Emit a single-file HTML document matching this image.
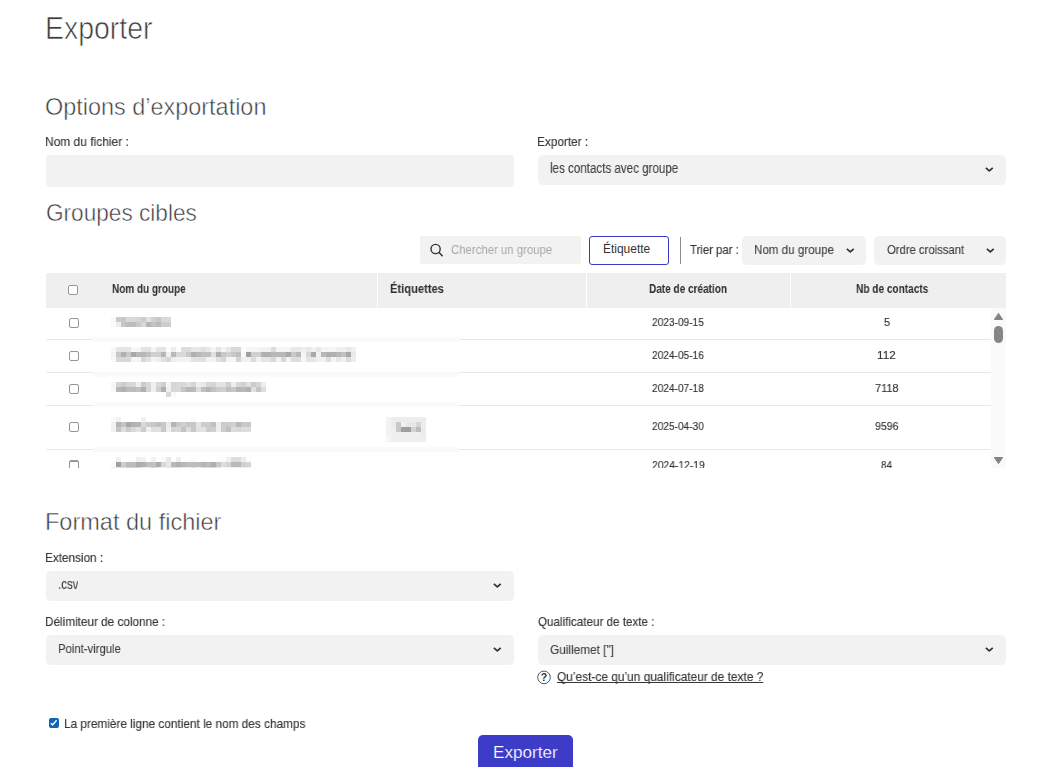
<!DOCTYPE html>
<html><head><meta charset="utf-8">
<style>
*{box-sizing:border-box;margin:0;padding:0}
html,body{width:1060px;height:767px;overflow:hidden;background:#fff}
body{font-family:"Liberation Sans",sans-serif;position:relative}
.t{position:absolute;white-space:nowrap;line-height:1;transform-origin:0 0}
.b{position:absolute}
.cb{position:absolute;width:10px;height:10px;border:1px solid #969696;border-radius:2px;background:#fff}
</style></head><body>
<div class="t" style="left:45.10px;top:13.00px;font-size:30.5px;color:#3c3c3c;transform:scaleX(0.9324);-webkit-text-stroke:0.65px #fff;">Exporter</div>
<div class="t" style="left:45.02px;top:95.20px;font-size:24px;color:#3c3c3c;transform:scaleX(0.9763);-webkit-text-stroke:0.5px #fff;">Options d’exportation</div>
<div class="t" style="left:45.08px;top:135.00px;font-size:13px;color:#363636;transform:scaleX(0.9202);will-change:transform;-webkit-text-stroke:0.15px #363636;">Nom du fichier :</div>
<div class="t" style="left:537.09px;top:135.00px;font-size:13px;color:#363636;transform:scaleX(0.9074);will-change:transform;-webkit-text-stroke:0.15px #363636;">Exporter :</div>
<div class="b" style="left:46px;top:155px;width:468px;height:32px;background:#f2f2f2;border-radius:4px;"></div>
<div class="b" style="left:538px;top:155px;width:468px;height:30px;background:#f2f2f2;border-radius:5px;"></div>
<div class="t" style="left:549.67px;top:161.00px;font-size:14px;color:#404040;transform:scaleX(0.8281);will-change:transform;-webkit-text-stroke:0.12px #404040;">les contacts avec groupe</div>
<svg class="b" style="left:983.20px;top:164.90px" width="12.60" height="8.80"><polyline points="2.85,2.85 6.30,5.95 9.75,2.85" fill="none" stroke="#333" stroke-width="1.7"/></svg>
<div class="t" style="left:45.66px;top:200.80px;font-size:24px;color:#3c3c3c;transform:scaleX(0.9424);-webkit-text-stroke:0.5px #fff;">Groupes cibles</div>
<div class="b" style="left:420px;top:236px;width:161px;height:28px;background:#f2f2f2;border-radius:3px;"></div>
<svg class="b" style="left:428px;top:242px" width="18" height="18"><circle cx="7.6" cy="7" r="4.6" fill="none" stroke="#333" stroke-width="1.4"/><line x1="10.9" y1="10.3" x2="14.6" y2="14.2" stroke="#333" stroke-width="1.5"/></svg>
<div class="t" style="left:450.73px;top:242.80px;font-size:13px;color:#a8a8a8;transform:scaleX(0.8746);will-change:transform;">Chercher un groupe</div>
<div class="b" style="left:589px;top:236px;width:80px;height:29px;border:1px solid #3b3bc6;border-radius:3px;background:#fff"></div>
<div class="t" style="left:603.08px;top:241.90px;font-size:13px;color:#333;transform:scaleX(0.9200);">Étiquette</div>
<div class="b" style="left:680px;top:237px;width:1px;height:27px;background:#8a8a8a"></div>
<div class="t" style="left:689.50px;top:242.80px;font-size:13px;color:#363636;transform:scaleX(0.8745);will-change:transform;-webkit-text-stroke:0.15px #363636;">Trier par :</div>
<div class="b" style="left:742px;top:236px;width:124px;height:29px;background:#f2f2f2;border-radius:5px;"></div>
<div class="t" style="left:754.11px;top:242.80px;font-size:13px;color:#404040;transform:scaleX(0.8920);will-change:transform;-webkit-text-stroke:0.12px #404040;">Nom du groupe</div>
<svg class="b" style="left:844.20px;top:245.80px" width="12.60" height="8.80"><polyline points="2.85,2.85 6.30,5.95 9.75,2.85" fill="none" stroke="#333" stroke-width="1.7"/></svg>
<div class="b" style="left:874px;top:236px;width:132px;height:29px;background:#f2f2f2;border-radius:5px;"></div>
<div class="t" style="left:886.70px;top:242.80px;font-size:13px;color:#404040;transform:scaleX(0.8674);will-change:transform;-webkit-text-stroke:0.12px #404040;">Ordre croissant</div>
<svg class="b" style="left:983.70px;top:245.80px" width="12.60" height="8.80"><polyline points="2.85,2.85 6.30,5.95 9.75,2.85" fill="none" stroke="#333" stroke-width="1.7"/></svg>
<div class="b" style="left:46px;top:273px;width:960px;height:35px;background:#efefef;border-radius:0px;"></div>
<div class="b" style="left:377px;top:273px;width:1px;height:35px;background:#fff"></div>
<div class="b" style="left:586px;top:273px;width:1px;height:35px;background:#fff"></div>
<div class="b" style="left:790px;top:273px;width:1px;height:35px;background:#fff"></div>
<div class="cb" style="left:68px;top:285px"></div>
<div class="t" style="left:111.77px;top:283.30px;font-size:12px;font-weight:700;color:#2e2e2e;transform:scaleX(0.8310);will-change:transform;">Nom du groupe</div>
<div class="t" style="left:390.07px;top:283.30px;font-size:12px;font-weight:700;color:#2e2e2e;transform:scaleX(0.9286);will-change:transform;">Étiquettes</div>
<div class="t" style="left:649.46px;top:283.10px;font-size:12px;font-weight:700;color:#2e2e2e;transform:scaleX(0.8359);will-change:transform;">Date de création</div>
<div class="t" style="left:855.66px;top:283.30px;font-size:12px;font-weight:700;color:#2e2e2e;transform:scaleX(0.8405);will-change:transform;">Nb de contacts</div>
<div class="b" style="left:46px;top:308px;width:960px;height:160px;overflow:hidden">
<div class="b" style="left:0;top:31px;width:945px;height:1px;background:#e9e9e9"></div><div class="b" style="left:0;top:64px;width:945px;height:1px;background:#e9e9e9"></div><div class="b" style="left:0;top:97px;width:945px;height:1px;background:#e9e9e9"></div><div class="b" style="left:0;top:141px;width:945px;height:1px;background:#e9e9e9"></div><div class="b" style="left:47px;top:29px;width:366px;height:5px;background:#fafafa"></div><div class="b" style="left:47px;top:64px;width:366px;height:5px;background:#fafafa"></div><div class="b" style="left:47px;top:94px;width:366px;height:5px;background:#fafafa"></div><div class="b" style="left:47px;top:139px;width:366px;height:5px;background:#fafafa"></div><div class="cb" style="left:23px;top:10px"></div><div class="cb" style="left:23px;top:43px"></div><div class="cb" style="left:23px;top:76px"></div><div class="cb" style="left:23px;top:114px"></div><div class="cb" style="left:23px;top:152px"></div>
</div>
<svg class="b" style="left:111px;top:317px" width="60" height="10" shape-rendering="crispEdges"><rect x="0" y="0" width="5" height="5" fill="#f8f8f8"/><rect x="5" y="0" width="5" height="5" fill="#cbcbcb"/><rect x="10" y="0" width="5" height="5" fill="#c8c8c8"/><rect x="15" y="0" width="5" height="5" fill="#dadada"/><rect x="20" y="0" width="5" height="5" fill="#d8d8d8"/><rect x="25" y="0" width="5" height="5" fill="#d5d5d5"/><rect x="30" y="0" width="5" height="5" fill="#cccccc"/><rect x="35" y="0" width="5" height="5" fill="#e2e2e2"/><rect x="40" y="0" width="5" height="5" fill="#d0d0d0"/><rect x="45" y="0" width="5" height="5" fill="#c8c8c8"/><rect x="50" y="0" width="5" height="5" fill="#d8d8d8"/><rect x="55" y="0" width="5" height="5" fill="#dadada"/><rect x="0" y="5" width="5" height="5" fill="#fafafa"/><rect x="5" y="5" width="5" height="5" fill="#eeeeee"/><rect x="10" y="5" width="5" height="5" fill="#c6c6c6"/><rect x="15" y="5" width="5" height="5" fill="#bdbdbd"/><rect x="20" y="5" width="5" height="5" fill="#bdbdbd"/><rect x="25" y="5" width="5" height="5" fill="#c8c8c8"/><rect x="30" y="5" width="5" height="5" fill="#d8d8d8"/><rect x="35" y="5" width="5" height="5" fill="#b5b5b5"/><rect x="40" y="5" width="5" height="5" fill="#c2c2c2"/><rect x="45" y="5" width="5" height="5" fill="#bababa"/><rect x="50" y="5" width="5" height="5" fill="#cccccc"/><rect x="55" y="5" width="5" height="5" fill="#cccccc"/></svg>
<svg class="b" style="left:111px;top:347px" width="245" height="15" shape-rendering="crispEdges"><rect x="0" y="0" width="5" height="5" fill="#f8f8f8"/><rect x="5" y="0" width="5" height="5" fill="#e5e5e5"/><rect x="10" y="0" width="5" height="5" fill="#e5e5e5"/><rect x="15" y="0" width="5" height="5" fill="#e5e5e5"/><rect x="20" y="0" width="5" height="5" fill="#f8f8f8"/><rect x="25" y="0" width="5" height="5" fill="#f5f5f5"/><rect x="30" y="0" width="5" height="5" fill="#e2e2e2"/><rect x="35" y="0" width="5" height="5" fill="#e2e2e2"/><rect x="40" y="0" width="5" height="5" fill="#f5f5f5"/><rect x="45" y="0" width="5" height="5" fill="#e5e5e5"/><rect x="50" y="0" width="5" height="5" fill="#e5e5e5"/><rect x="55" y="0" width="5" height="5" fill="#fcfcfc"/><rect x="60" y="0" width="5" height="5" fill="#eeeeee"/><rect x="65" y="0" width="5" height="5" fill="#fcfcfc"/><rect x="70" y="0" width="5" height="5" fill="#dddddd"/><rect x="75" y="0" width="5" height="5" fill="#dddddd"/><rect x="80" y="0" width="5" height="5" fill="#e8e8e8"/><rect x="85" y="0" width="5" height="5" fill="#e8e8e8"/><rect x="90" y="0" width="5" height="5" fill="#e0e0e0"/><rect x="95" y="0" width="5" height="5" fill="#e8e8e8"/><rect x="100" y="0" width="5" height="5" fill="#f5f5f5"/><rect x="105" y="0" width="5" height="5" fill="#e5e5e5"/><rect x="110" y="0" width="5" height="5" fill="#f5f5f5"/><rect x="115" y="0" width="5" height="5" fill="#e8e8e8"/><rect x="120" y="0" width="5" height="5" fill="#d8d8d8"/><rect x="125" y="0" width="5" height="5" fill="#d8d8d8"/><rect x="130" y="0" width="5" height="5" fill="#fcfcfc"/><rect x="135" y="0" width="5" height="5" fill="#f5f5f5"/><rect x="140" y="0" width="5" height="5" fill="#f5f5f5"/><rect x="145" y="0" width="5" height="5" fill="#f5f5f5"/><rect x="150" y="0" width="5" height="5" fill="#f2f2f2"/><rect x="155" y="0" width="5" height="5" fill="#f2f2f2"/><rect x="160" y="0" width="5" height="5" fill="#dddddd"/><rect x="165" y="0" width="5" height="5" fill="#f5f5f5"/><rect x="170" y="0" width="5" height="5" fill="#f5f5f5"/><rect x="175" y="0" width="5" height="5" fill="#f5f5f5"/><rect x="180" y="0" width="5" height="5" fill="#e8e8e8"/><rect x="185" y="0" width="5" height="5" fill="#e8e8e8"/><rect x="190" y="0" width="5" height="5" fill="#f0f0f0"/><rect x="195" y="0" width="5" height="5" fill="#e8e8e8"/><rect x="200" y="0" width="5" height="5" fill="#f2f2f2"/><rect x="205" y="0" width="5" height="5" fill="#e8e8e8"/><rect x="210" y="0" width="5" height="5" fill="#f5f5f5"/><rect x="215" y="0" width="5" height="5" fill="#f5f5f5"/><rect x="220" y="0" width="5" height="5" fill="#f5f5f5"/><rect x="225" y="0" width="5" height="5" fill="#f0f0f0"/><rect x="230" y="0" width="5" height="5" fill="#f0f0f0"/><rect x="235" y="0" width="5" height="5" fill="#e8e8e8"/><rect x="240" y="0" width="5" height="5" fill="#f0f0f0"/><rect x="0" y="5" width="5" height="5" fill="#f5f5f5"/><rect x="5" y="5" width="5" height="5" fill="#c8c8c8"/><rect x="10" y="5" width="5" height="5" fill="#b0b0b0"/><rect x="15" y="5" width="5" height="5" fill="#c8c8c8"/><rect x="20" y="5" width="5" height="5" fill="#a8a8a8"/><rect x="25" y="5" width="5" height="5" fill="#b8b8b8"/><rect x="30" y="5" width="5" height="5" fill="#b8b8b8"/><rect x="35" y="5" width="5" height="5" fill="#c0c0c0"/><rect x="40" y="5" width="5" height="5" fill="#d0d0d0"/><rect x="45" y="5" width="5" height="5" fill="#d0d0d0"/><rect x="50" y="5" width="5" height="5" fill="#b8b8b8"/><rect x="55" y="5" width="5" height="5" fill="#f0f0f0"/><rect x="60" y="5" width="5" height="5" fill="#b8b8b8"/><rect x="65" y="5" width="5" height="5" fill="#d8d8d8"/><rect x="70" y="5" width="5" height="5" fill="#d8d8d8"/><rect x="75" y="5" width="5" height="5" fill="#c8c8c8"/><rect x="80" y="5" width="5" height="5" fill="#b0b0b0"/><rect x="85" y="5" width="5" height="5" fill="#b8b8b8"/><rect x="90" y="5" width="5" height="5" fill="#c0c0c0"/><rect x="95" y="5" width="5" height="5" fill="#c0c0c0"/><rect x="100" y="5" width="5" height="5" fill="#e0e0e0"/><rect x="105" y="5" width="5" height="5" fill="#b0b0b0"/><rect x="110" y="5" width="5" height="5" fill="#c8c8c8"/><rect x="115" y="5" width="5" height="5" fill="#d0d0d0"/><rect x="120" y="5" width="5" height="5" fill="#c8c8c8"/><rect x="125" y="5" width="5" height="5" fill="#c0c0c0"/><rect x="130" y="5" width="5" height="5" fill="#f8f8f8"/><rect x="135" y="5" width="5" height="5" fill="#a0a0a0"/><rect x="140" y="5" width="5" height="5" fill="#d0d0d0"/><rect x="145" y="5" width="5" height="5" fill="#d0d0d0"/><rect x="150" y="5" width="5" height="5" fill="#b0b0b0"/><rect x="155" y="5" width="5" height="5" fill="#b0b0b0"/><rect x="160" y="5" width="5" height="5" fill="#b8b8b8"/><rect x="165" y="5" width="5" height="5" fill="#b8b8b8"/><rect x="170" y="5" width="5" height="5" fill="#b8b8b8"/><rect x="175" y="5" width="5" height="5" fill="#a8a8a8"/><rect x="180" y="5" width="5" height="5" fill="#c8c8c8"/><rect x="185" y="5" width="5" height="5" fill="#b8b8b8"/><rect x="190" y="5" width="5" height="5" fill="#f5f5f5"/><rect x="195" y="5" width="5" height="5" fill="#d8d8d8"/><rect x="200" y="5" width="5" height="5" fill="#a8a8a8"/><rect x="205" y="5" width="5" height="5" fill="#f0f0f0"/><rect x="210" y="5" width="5" height="5" fill="#b8b8b8"/><rect x="215" y="5" width="5" height="5" fill="#b0b0b0"/><rect x="220" y="5" width="5" height="5" fill="#b0b0b0"/><rect x="225" y="5" width="5" height="5" fill="#b8b8b8"/><rect x="230" y="5" width="5" height="5" fill="#c0c0c0"/><rect x="235" y="5" width="5" height="5" fill="#a8a8a8"/><rect x="240" y="5" width="5" height="5" fill="#e8e8e8"/><rect x="0" y="10" width="5" height="5" fill="#f8f8f8"/><rect x="5" y="10" width="5" height="5" fill="#d8d8d8"/><rect x="10" y="10" width="5" height="5" fill="#d8d8d8"/><rect x="15" y="10" width="5" height="5" fill="#d8d8d8"/><rect x="20" y="10" width="5" height="5" fill="#f5f5f5"/><rect x="25" y="10" width="5" height="5" fill="#f5f5f5"/><rect x="30" y="10" width="5" height="5" fill="#d8d8d8"/><rect x="35" y="10" width="5" height="5" fill="#e2e2e2"/><rect x="40" y="10" width="5" height="5" fill="#f5f5f5"/><rect x="45" y="10" width="5" height="5" fill="#eeeeee"/><rect x="50" y="10" width="5" height="5" fill="#e0e0e0"/><rect x="55" y="10" width="5" height="5" fill="#d8d8d8"/><rect x="60" y="10" width="5" height="5" fill="#eeeeee"/><rect x="65" y="10" width="5" height="5" fill="#f2f2f2"/><rect x="70" y="10" width="5" height="5" fill="#f2f2f2"/><rect x="75" y="10" width="5" height="5" fill="#f2f2f2"/><rect x="80" y="10" width="5" height="5" fill="#e2e2e2"/><rect x="85" y="10" width="5" height="5" fill="#e2e2e2"/><rect x="90" y="10" width="5" height="5" fill="#e2e2e2"/><rect x="95" y="10" width="5" height="5" fill="#f2f2f2"/><rect x="100" y="10" width="5" height="5" fill="#f2f2f2"/><rect x="105" y="10" width="5" height="5" fill="#e0e0e0"/><rect x="110" y="10" width="5" height="5" fill="#d5d5d5"/><rect x="115" y="10" width="5" height="5" fill="#f5f5f5"/><rect x="120" y="10" width="5" height="5" fill="#f5f5f5"/><rect x="125" y="10" width="5" height="5" fill="#d5d5d5"/><rect x="130" y="10" width="5" height="5" fill="#f0f0f0"/><rect x="135" y="10" width="5" height="5" fill="#f0f0f0"/><rect x="140" y="10" width="5" height="5" fill="#dddddd"/><rect x="145" y="10" width="5" height="5" fill="#f2f2f2"/><rect x="150" y="10" width="5" height="5" fill="#e5e5e5"/><rect x="155" y="10" width="5" height="5" fill="#e5e5e5"/><rect x="160" y="10" width="5" height="5" fill="#d8d8d8"/><rect x="165" y="10" width="5" height="5" fill="#f2f2f2"/><rect x="170" y="10" width="5" height="5" fill="#d8d8d8"/><rect x="175" y="10" width="5" height="5" fill="#f2f2f2"/><rect x="180" y="10" width="5" height="5" fill="#dddddd"/><rect x="185" y="10" width="5" height="5" fill="#dddddd"/><rect x="190" y="10" width="5" height="5" fill="#f5f5f5"/><rect x="195" y="10" width="5" height="5" fill="#e5e5e5"/><rect x="200" y="10" width="5" height="5" fill="#e5e5e5"/><rect x="205" y="10" width="5" height="5" fill="#f0f0f0"/><rect x="210" y="10" width="5" height="5" fill="#f2f2f2"/><rect x="215" y="10" width="5" height="5" fill="#dddddd"/><rect x="220" y="10" width="5" height="5" fill="#f5f5f5"/><rect x="225" y="10" width="5" height="5" fill="#e8e8e8"/><rect x="230" y="10" width="5" height="5" fill="#f2f2f2"/><rect x="235" y="10" width="5" height="5" fill="#dddddd"/><rect x="240" y="10" width="5" height="5" fill="#eeeeee"/></svg>
<svg class="b" style="left:111px;top:382px" width="155" height="15" shape-rendering="crispEdges"><rect x="0" y="0" width="5" height="5" fill="#f5f5f5"/><rect x="5" y="0" width="5" height="5" fill="#d5d5d5"/><rect x="10" y="0" width="5" height="5" fill="#cccccc"/><rect x="15" y="0" width="5" height="5" fill="#d5d5d5"/><rect x="20" y="0" width="5" height="5" fill="#d8d8d8"/><rect x="25" y="0" width="5" height="5" fill="#eeeeee"/><rect x="30" y="0" width="5" height="5" fill="#cccccc"/><rect x="35" y="0" width="5" height="5" fill="#d8d8d8"/><rect x="40" y="0" width="5" height="5" fill="#f0f0f0"/><rect x="45" y="0" width="5" height="5" fill="#d8d8d8"/><rect x="50" y="0" width="5" height="5" fill="#d0d0d0"/><rect x="55" y="0" width="5" height="5" fill="#f5f5f5"/><rect x="60" y="0" width="5" height="5" fill="#d5d5d5"/><rect x="65" y="0" width="5" height="5" fill="#d8d8d8"/><rect x="70" y="0" width="5" height="5" fill="#d8d8d8"/><rect x="75" y="0" width="5" height="5" fill="#e0e0e0"/><rect x="80" y="0" width="5" height="5" fill="#d5d5d5"/><rect x="85" y="0" width="5" height="5" fill="#eeeeee"/><rect x="90" y="0" width="5" height="5" fill="#e8e8e8"/><rect x="95" y="0" width="5" height="5" fill="#d8d8d8"/><rect x="100" y="0" width="5" height="5" fill="#d5d5d5"/><rect x="105" y="0" width="5" height="5" fill="#e5e5e5"/><rect x="110" y="0" width="5" height="5" fill="#e2e2e2"/><rect x="115" y="0" width="5" height="5" fill="#d0d0d0"/><rect x="120" y="0" width="5" height="5" fill="#eeeeee"/><rect x="125" y="0" width="5" height="5" fill="#d8d8d8"/><rect x="130" y="0" width="5" height="5" fill="#d0d0d0"/><rect x="135" y="0" width="5" height="5" fill="#e0e0e0"/><rect x="140" y="0" width="5" height="5" fill="#cccccc"/><rect x="145" y="0" width="5" height="5" fill="#d5d5d5"/><rect x="150" y="0" width="5" height="5" fill="#eeeeee"/><rect x="0" y="5" width="5" height="5" fill="#f8f8f8"/><rect x="5" y="5" width="5" height="5" fill="#b8b8b8"/><rect x="10" y="5" width="5" height="5" fill="#b0b0b0"/><rect x="15" y="5" width="5" height="5" fill="#bcbcbc"/><rect x="20" y="5" width="5" height="5" fill="#bcbcbc"/><rect x="25" y="5" width="5" height="5" fill="#c0c0c0"/><rect x="30" y="5" width="5" height="5" fill="#b0b0b0"/><rect x="35" y="5" width="5" height="5" fill="#d5d5d5"/><rect x="40" y="5" width="5" height="5" fill="#f0f0f0"/><rect x="45" y="5" width="5" height="5" fill="#d0d0d0"/><rect x="50" y="5" width="5" height="5" fill="#b0b0b0"/><rect x="55" y="5" width="5" height="5" fill="#f0f0f0"/><rect x="60" y="5" width="5" height="5" fill="#d8d8d8"/><rect x="65" y="5" width="5" height="5" fill="#d8d8d8"/><rect x="70" y="5" width="5" height="5" fill="#c5c5c5"/><rect x="75" y="5" width="5" height="5" fill="#b8b8b8"/><rect x="80" y="5" width="5" height="5" fill="#bcbcbc"/><rect x="85" y="5" width="5" height="5" fill="#dddddd"/><rect x="90" y="5" width="5" height="5" fill="#c0c0c0"/><rect x="95" y="5" width="5" height="5" fill="#b5b5b5"/><rect x="100" y="5" width="5" height="5" fill="#c2c2c2"/><rect x="105" y="5" width="5" height="5" fill="#cccccc"/><rect x="110" y="5" width="5" height="5" fill="#d0d0d0"/><rect x="115" y="5" width="5" height="5" fill="#c0c0c0"/><rect x="120" y="5" width="5" height="5" fill="#c8c8c8"/><rect x="125" y="5" width="5" height="5" fill="#b5b5b5"/><rect x="130" y="5" width="5" height="5" fill="#b8b8b8"/><rect x="135" y="5" width="5" height="5" fill="#b0b0b0"/><rect x="140" y="5" width="5" height="5" fill="#e0e0e0"/><rect x="145" y="5" width="5" height="5" fill="#c5c5c5"/><rect x="150" y="5" width="5" height="5" fill="#dddddd"/><rect x="55" y="10" width="5" height="5" fill="#d8d8d8"/><rect x="60" y="10" width="5" height="5" fill="#f8f8f8"/></svg>
<svg class="b" style="left:111px;top:417px" width="140" height="15" shape-rendering="crispEdges"><rect x="0" y="0" width="5" height="5" fill="#fafafa"/><rect x="5" y="0" width="5" height="5" fill="#f2f2f2"/><rect x="30" y="0" width="5" height="5" fill="#f0f0f0"/><rect x="80" y="0" width="5" height="5" fill="#fafafa"/><rect x="0" y="5" width="5" height="5" fill="#f2f2f2"/><rect x="5" y="5" width="5" height="5" fill="#b5b5b5"/><rect x="10" y="5" width="5" height="5" fill="#c5c5c5"/><rect x="15" y="5" width="5" height="5" fill="#a8a8a8"/><rect x="20" y="5" width="5" height="5" fill="#b2b2b2"/><rect x="25" y="5" width="5" height="5" fill="#b5b5b5"/><rect x="30" y="5" width="5" height="5" fill="#d8d8d8"/><rect x="35" y="5" width="5" height="5" fill="#cccccc"/><rect x="40" y="5" width="5" height="5" fill="#c8c8c8"/><rect x="45" y="5" width="5" height="5" fill="#c0c0c0"/><rect x="50" y="5" width="5" height="5" fill="#c8c8c8"/><rect x="55" y="5" width="5" height="5" fill="#e8e8e8"/><rect x="60" y="5" width="5" height="5" fill="#b5b5b5"/><rect x="65" y="5" width="5" height="5" fill="#c8c8c8"/><rect x="70" y="5" width="5" height="5" fill="#d0d0d0"/><rect x="75" y="5" width="5" height="5" fill="#c8c8c8"/><rect x="80" y="5" width="5" height="5" fill="#c8c8c8"/><rect x="85" y="5" width="5" height="5" fill="#e5e5e5"/><rect x="90" y="5" width="5" height="5" fill="#cccccc"/><rect x="95" y="5" width="5" height="5" fill="#cccccc"/><rect x="100" y="5" width="5" height="5" fill="#c0c0c0"/><rect x="105" y="5" width="5" height="5" fill="#eeeeee"/><rect x="110" y="5" width="5" height="5" fill="#cccccc"/><rect x="115" y="5" width="5" height="5" fill="#cccccc"/><rect x="120" y="5" width="5" height="5" fill="#d0d0d0"/><rect x="125" y="5" width="5" height="5" fill="#b8b8b8"/><rect x="130" y="5" width="5" height="5" fill="#c8c8c8"/><rect x="135" y="5" width="5" height="5" fill="#c8c8c8"/><rect x="0" y="10" width="5" height="5" fill="#f0f0f0"/><rect x="5" y="10" width="5" height="5" fill="#c5c5c5"/><rect x="10" y="10" width="5" height="5" fill="#dddddd"/><rect x="15" y="10" width="5" height="5" fill="#cccccc"/><rect x="20" y="10" width="5" height="5" fill="#d8d8d8"/><rect x="25" y="10" width="5" height="5" fill="#e2e2e2"/><rect x="30" y="10" width="5" height="5" fill="#cccccc"/><rect x="35" y="10" width="5" height="5" fill="#f0f0f0"/><rect x="40" y="10" width="5" height="5" fill="#e0e0e0"/><rect x="45" y="10" width="5" height="5" fill="#e0e0e0"/><rect x="50" y="10" width="5" height="5" fill="#c8c8c8"/><rect x="55" y="10" width="5" height="5" fill="#eeeeee"/><rect x="60" y="10" width="5" height="5" fill="#d5d5d5"/><rect x="65" y="10" width="5" height="5" fill="#d8d8d8"/><rect x="70" y="10" width="5" height="5" fill="#c5c5c5"/><rect x="75" y="10" width="5" height="5" fill="#dddddd"/><rect x="80" y="10" width="5" height="5" fill="#c8c8c8"/><rect x="85" y="10" width="5" height="5" fill="#e2e2e2"/><rect x="90" y="10" width="5" height="5" fill="#e2e2e2"/><rect x="95" y="10" width="5" height="5" fill="#cccccc"/><rect x="100" y="10" width="5" height="5" fill="#d0d0d0"/><rect x="105" y="10" width="5" height="5" fill="#eeeeee"/><rect x="110" y="10" width="5" height="5" fill="#cccccc"/><rect x="115" y="10" width="5" height="5" fill="#c0c0c0"/><rect x="120" y="10" width="5" height="5" fill="#dddddd"/><rect x="125" y="10" width="5" height="5" fill="#d8d8d8"/><rect x="130" y="10" width="5" height="5" fill="#dddddd"/><rect x="135" y="10" width="5" height="5" fill="#dddddd"/></svg>
<svg class="b" style="left:386px;top:417px" width="40" height="25"><rect x="0" y="0" width="5" height="5" fill="rgb(244,244,244)"/><rect x="5" y="0" width="5" height="5" fill="rgb(237,237,237)"/><rect x="10" y="0" width="5" height="5" fill="rgb(237,237,237)"/><rect x="15" y="0" width="5" height="5" fill="rgb(237,237,237)"/><rect x="20" y="0" width="5" height="5" fill="rgb(237,237,237)"/><rect x="25" y="0" width="5" height="5" fill="rgb(237,237,237)"/><rect x="30" y="0" width="5" height="5" fill="rgb(237,237,237)"/><rect x="35" y="0" width="5" height="5" fill="rgb(236,236,236)"/><rect x="0" y="5" width="5" height="5" fill="rgb(242,242,242)"/><rect x="5" y="5" width="5" height="5" fill="rgb(235,235,235)"/><rect x="10" y="5" width="5" height="5" fill="rgb(200,200,200)"/><rect x="15" y="5" width="5" height="5" fill="rgb(240,240,240)"/><rect x="20" y="5" width="5" height="5" fill="rgb(232,232,232)"/><rect x="25" y="5" width="5" height="5" fill="rgb(232,232,232)"/><rect x="30" y="5" width="5" height="5" fill="rgb(214,214,214)"/><rect x="35" y="5" width="5" height="5" fill="rgb(236,236,236)"/><rect x="0" y="10" width="5" height="5" fill="rgb(242,242,242)"/><rect x="5" y="10" width="5" height="5" fill="rgb(239,239,239)"/><rect x="10" y="10" width="5" height="5" fill="rgb(200,200,200)"/><rect x="15" y="10" width="5" height="5" fill="rgb(158,158,158)"/><rect x="20" y="10" width="5" height="5" fill="rgb(158,158,158)"/><rect x="25" y="10" width="5" height="5" fill="rgb(212,212,212)"/><rect x="30" y="10" width="5" height="5" fill="rgb(189,189,189)"/><rect x="35" y="10" width="5" height="5" fill="rgb(236,236,236)"/><rect x="0" y="15" width="5" height="5" fill="rgb(242,242,242)"/><rect x="5" y="15" width="5" height="5" fill="rgb(239,239,239)"/><rect x="10" y="15" width="5" height="5" fill="rgb(239,239,239)"/><rect x="15" y="15" width="5" height="5" fill="rgb(239,239,239)"/><rect x="20" y="15" width="5" height="5" fill="rgb(239,239,239)"/><rect x="25" y="15" width="5" height="5" fill="rgb(239,239,239)"/><rect x="30" y="15" width="5" height="5" fill="rgb(239,239,239)"/><rect x="35" y="15" width="5" height="5" fill="rgb(236,236,236)"/><rect x="0" y="20" width="5" height="5" fill="rgb(246,246,246)"/><rect x="5" y="20" width="5" height="5" fill="rgb(239,239,239)"/><rect x="10" y="20" width="5" height="5" fill="rgb(239,239,239)"/><rect x="15" y="20" width="5" height="5" fill="rgb(239,239,239)"/><rect x="20" y="20" width="5" height="5" fill="rgb(239,239,239)"/><rect x="25" y="20" width="5" height="5" fill="rgb(239,239,239)"/><rect x="30" y="20" width="5" height="5" fill="rgb(239,239,239)"/><rect x="35" y="20" width="5" height="5" fill="rgb(239,239,239)"/></svg>
<div class="t" style="left:651.50px;top:317.30px;font-size:11.5px;color:#333;transform:scaleX(0.8814);will-change:transform;-webkit-text-stroke:0.15px #333;">2023-09-15</div>
<div class="t" style="left:651.50px;top:350.20px;font-size:11.5px;color:#333;transform:scaleX(0.8814);will-change:transform;-webkit-text-stroke:0.15px #333;">2024-05-16</div>
<div class="t" style="left:651.50px;top:382.90px;font-size:11.5px;color:#333;transform:scaleX(0.8814);will-change:transform;-webkit-text-stroke:0.15px #333;">2024-07-18</div>
<div class="t" style="left:651.50px;top:421.20px;font-size:11.5px;color:#333;transform:scaleX(0.8814);will-change:transform;-webkit-text-stroke:0.15px #333;">2025-04-30</div>
<div class="t" style="left:883.50px;top:317.30px;font-size:11.5px;color:#333;transform:scaleX(0.9500);will-change:transform;-webkit-text-stroke:0.15px #333;">5</div>
<div class="t" style="left:876.68px;top:350.20px;font-size:11.5px;color:#333;transform:scaleX(1.0176);will-change:transform;-webkit-text-stroke:0.15px #333;">112</div>
<div class="t" style="left:875.00px;top:382.90px;font-size:11.5px;color:#333;transform:scaleX(0.9542);will-change:transform;-webkit-text-stroke:0.15px #333;">7118</div>
<div class="t" style="left:875.00px;top:421.20px;font-size:11.5px;color:#333;transform:scaleX(0.9160);will-change:transform;-webkit-text-stroke:0.15px #333;">9596</div>
<div class="b" style="left:0;top:0;width:1060px;height:468px;overflow:hidden">
<svg class="b" style="left:111px;top:457px" width="140" height="15" shape-rendering="crispEdges"><rect x="5" y="0" width="5" height="5" fill="#f2f2f2"/><rect x="25" y="0" width="5" height="5" fill="#f0f0f0"/><rect x="30" y="0" width="5" height="5" fill="#f2f2f2"/><rect x="40" y="0" width="5" height="5" fill="#f2f2f2"/><rect x="50" y="0" width="5" height="5" fill="#fafafa"/><rect x="55" y="0" width="5" height="5" fill="#e8e8e8"/><rect x="65" y="0" width="5" height="5" fill="#eeeeee"/><rect x="80" y="0" width="5" height="5" fill="#fafafa"/><rect x="105" y="0" width="5" height="5" fill="#fcfcfc"/><rect x="110" y="0" width="5" height="5" fill="#fcfcfc"/><rect x="115" y="0" width="5" height="5" fill="#f0f0f0"/><rect x="120" y="0" width="5" height="5" fill="#dddddd"/><rect x="125" y="0" width="5" height="5" fill="#dddddd"/><rect x="130" y="0" width="5" height="5" fill="#eeeeee"/><rect x="135" y="0" width="5" height="5" fill="#fcfcfc"/><rect x="0" y="5" width="5" height="5" fill="#fafafa"/><rect x="5" y="5" width="5" height="5" fill="#a0a0a0"/><rect x="10" y="5" width="5" height="5" fill="#cccccc"/><rect x="15" y="5" width="5" height="5" fill="#bcbcbc"/><rect x="20" y="5" width="5" height="5" fill="#bcbcbc"/><rect x="25" y="5" width="5" height="5" fill="#acacac"/><rect x="30" y="5" width="5" height="5" fill="#b0b0b0"/><rect x="35" y="5" width="5" height="5" fill="#c0c0c0"/><rect x="40" y="5" width="5" height="5" fill="#c0c0c0"/><rect x="45" y="5" width="5" height="5" fill="#acacac"/><rect x="50" y="5" width="5" height="5" fill="#d8d8d8"/><rect x="55" y="5" width="5" height="5" fill="#e8e8e8"/><rect x="60" y="5" width="5" height="5" fill="#b8b8b8"/><rect x="65" y="5" width="5" height="5" fill="#b0b0b0"/><rect x="70" y="5" width="5" height="5" fill="#b8b8b8"/><rect x="75" y="5" width="5" height="5" fill="#bcbcbc"/><rect x="80" y="5" width="5" height="5" fill="#bcbcbc"/><rect x="85" y="5" width="5" height="5" fill="#bcbcbc"/><rect x="90" y="5" width="5" height="5" fill="#b5b5b5"/><rect x="95" y="5" width="5" height="5" fill="#bcbcbc"/><rect x="100" y="5" width="5" height="5" fill="#b0b0b0"/><rect x="105" y="5" width="5" height="5" fill="#c8c8c8"/><rect x="110" y="5" width="5" height="5" fill="#dddddd"/><rect x="115" y="5" width="5" height="5" fill="#d5d5d5"/><rect x="120" y="5" width="5" height="5" fill="#b8b8b8"/><rect x="125" y="5" width="5" height="5" fill="#b8b8b8"/><rect x="130" y="5" width="5" height="5" fill="#d0d0d0"/><rect x="135" y="5" width="5" height="5" fill="#d5d5d5"/><rect x="0" y="10" width="5" height="5" fill="#eeeeee"/><rect x="5" y="10" width="5" height="5" fill="#e8e8e8"/><rect x="10" y="10" width="5" height="5" fill="#dddddd"/><rect x="15" y="10" width="5" height="5" fill="#d5d5d5"/><rect x="20" y="10" width="5" height="5" fill="#d5d5d5"/><rect x="25" y="10" width="5" height="5" fill="#d5d5d5"/><rect x="30" y="10" width="5" height="5" fill="#eeeeee"/><rect x="35" y="10" width="5" height="5" fill="#e8e8e8"/><rect x="40" y="10" width="5" height="5" fill="#d5d5d5"/><rect x="45" y="10" width="5" height="5" fill="#e8e8e8"/><rect x="50" y="10" width="5" height="5" fill="#f2f2f2"/><rect x="55" y="10" width="5" height="5" fill="#e2e2e2"/><rect x="60" y="10" width="5" height="5" fill="#dddddd"/><rect x="65" y="10" width="5" height="5" fill="#e2e2e2"/><rect x="70" y="10" width="5" height="5" fill="#e8e8e8"/><rect x="75" y="10" width="5" height="5" fill="#eeeeee"/><rect x="80" y="10" width="5" height="5" fill="#dddddd"/><rect x="85" y="10" width="5" height="5" fill="#eeeeee"/><rect x="90" y="10" width="5" height="5" fill="#d8d8d8"/><rect x="95" y="10" width="5" height="5" fill="#d8d8d8"/><rect x="100" y="10" width="5" height="5" fill="#d8d8d8"/><rect x="105" y="10" width="5" height="5" fill="#e5e5e5"/><rect x="110" y="10" width="5" height="5" fill="#f5f5f5"/><rect x="115" y="10" width="5" height="5" fill="#f5f5f5"/><rect x="120" y="10" width="5" height="5" fill="#f0f0f0"/><rect x="125" y="10" width="5" height="5" fill="#f0f0f0"/><rect x="130" y="10" width="5" height="5" fill="#eeeeee"/><rect x="135" y="10" width="5" height="5" fill="#eeeeee"/></svg>
<div class="cb" style="left:69px;top:461px"></div>
<div class="t" style="left:651.50px;top:459.60px;font-size:11.5px;color:#333;transform:scaleX(0.8966);will-change:transform;-webkit-text-stroke:0.15px #333;">2024-12-19</div>
<div class="t" style="left:880.80px;top:459.60px;font-size:11.5px;color:#333;transform:scaleX(0.8538);will-change:transform;-webkit-text-stroke:0.15px #333;">84</div>
</div>
<div class="b" style="left:991px;top:308px;width:15px;height:160px;background:#fafafa;border-radius:0px;"></div>
<svg class="b" style="left:991px;top:308px" width="15" height="160"><polygon points="3.7,11.4 11.3,11.4 7.5,5.8" fill="#858585" stroke="#858585" stroke-width="1.3" stroke-linejoin="round"/><rect x="3" y="18" width="9" height="17" rx="4.5" fill="#858585"/><polygon points="3.7,149.6 11.3,149.6 7.5,155.2" fill="#858585" stroke="#858585" stroke-width="1.3" stroke-linejoin="round"/></svg>
<div class="t" style="left:44.54px;top:510.20px;font-size:24px;color:#3c3c3c;transform:scaleX(0.9797);-webkit-text-stroke:0.5px #fff;">Format du fichier</div>
<div class="t" style="left:45.10px;top:550.80px;font-size:13px;color:#363636;transform:scaleX(0.9032);will-change:transform;-webkit-text-stroke:0.15px #363636;">Extension :</div>
<div class="b" style="left:46px;top:571px;width:468px;height:30px;background:#f2f2f2;border-radius:5px;"></div>
<div class="t" style="left:57.99px;top:577.20px;font-size:14px;color:#404040;transform:scaleX(0.8125);will-change:transform;-webkit-text-stroke:0.12px #404040;">.csv</div>
<svg class="b" style="left:491.30px;top:581.10px" width="12.60" height="8.80"><polyline points="2.85,2.85 6.30,5.95 9.75,2.85" fill="none" stroke="#333" stroke-width="1.7"/></svg>
<div class="t" style="left:45.10px;top:615.20px;font-size:13px;color:#363636;transform:scaleX(0.9038);will-change:transform;-webkit-text-stroke:0.15px #363636;">Délimiteur de colonne :</div>
<div class="b" style="left:46px;top:635px;width:468px;height:30px;background:#f2f2f2;border-radius:5px;"></div>
<div class="t" style="left:57.96px;top:642.30px;font-size:13.5px;color:#404040;transform:scaleX(0.8378);will-change:transform;-webkit-text-stroke:0.12px #404040;">Point-virgule</div>
<svg class="b" style="left:491.30px;top:645.20px" width="12.60" height="8.80"><polyline points="2.85,2.85 6.30,5.95 9.75,2.85" fill="none" stroke="#333" stroke-width="1.7"/></svg>
<div class="t" style="left:538.30px;top:615.00px;font-size:13px;color:#363636;transform:scaleX(0.8953);will-change:transform;-webkit-text-stroke:0.15px #363636;">Qualificateur de texte :</div>
<div class="b" style="left:538px;top:635px;width:468px;height:30px;background:#f2f2f2;border-radius:5px;"></div>
<div class="t" style="left:549.92px;top:642.60px;font-size:13.5px;color:#404040;transform:scaleX(0.8761);will-change:transform;-webkit-text-stroke:0.12px #404040;">Guillemet ["]</div>
<svg class="b" style="left:983.20px;top:645.20px" width="12.60" height="8.80"><polyline points="2.85,2.85 6.30,5.95 9.75,2.85" fill="none" stroke="#333" stroke-width="1.7"/></svg>
<svg class="b" style="left:537px;top:670px" width="15" height="15"><circle cx="7" cy="7.4" r="6.3" fill="none" stroke="#555" stroke-width="1"/><text x="7" y="11.3" font-family="Liberation Sans" font-size="10.5" font-weight="700" text-anchor="middle" fill="#333">?</text></svg>
<div class="t" style="left:556.80px;top:669.80px;font-size:13px;color:#363636;transform:scaleX(0.9151);text-decoration:underline;text-decoration-skip-ink:none;will-change:transform;-webkit-text-stroke:0.15px #363636;">Qu’est-ce qu’un qualificateur de texte ?</div>
<svg class="b" style="left:48px;top:717px" width="12" height="12"><rect x="1" y="1" width="10" height="10" rx="2" fill="#0f63b9"/><polyline points="2.9,6.3 4.6,7.9 8.6,3.3" fill="none" stroke="#fff" stroke-width="1.5"/></svg>
<div class="t" style="left:64.09px;top:717.10px;font-size:13px;color:#363636;transform:scaleX(0.9075);will-change:transform;-webkit-text-stroke:0.15px #363636;">La première ligne contient le nom des champs</div>
<div class="b" style="left:478px;top:735px;width:95px;height:40px;background:#3c3cc8;border-radius:5px;"></div>
<div class="t" style="left:492.99px;top:744.00px;font-size:17px;color:#ffffff;transform:scaleX(1.0079);-webkit-text-stroke:0.2px #3c3cc8;">Exporter</div>
</body></html>
